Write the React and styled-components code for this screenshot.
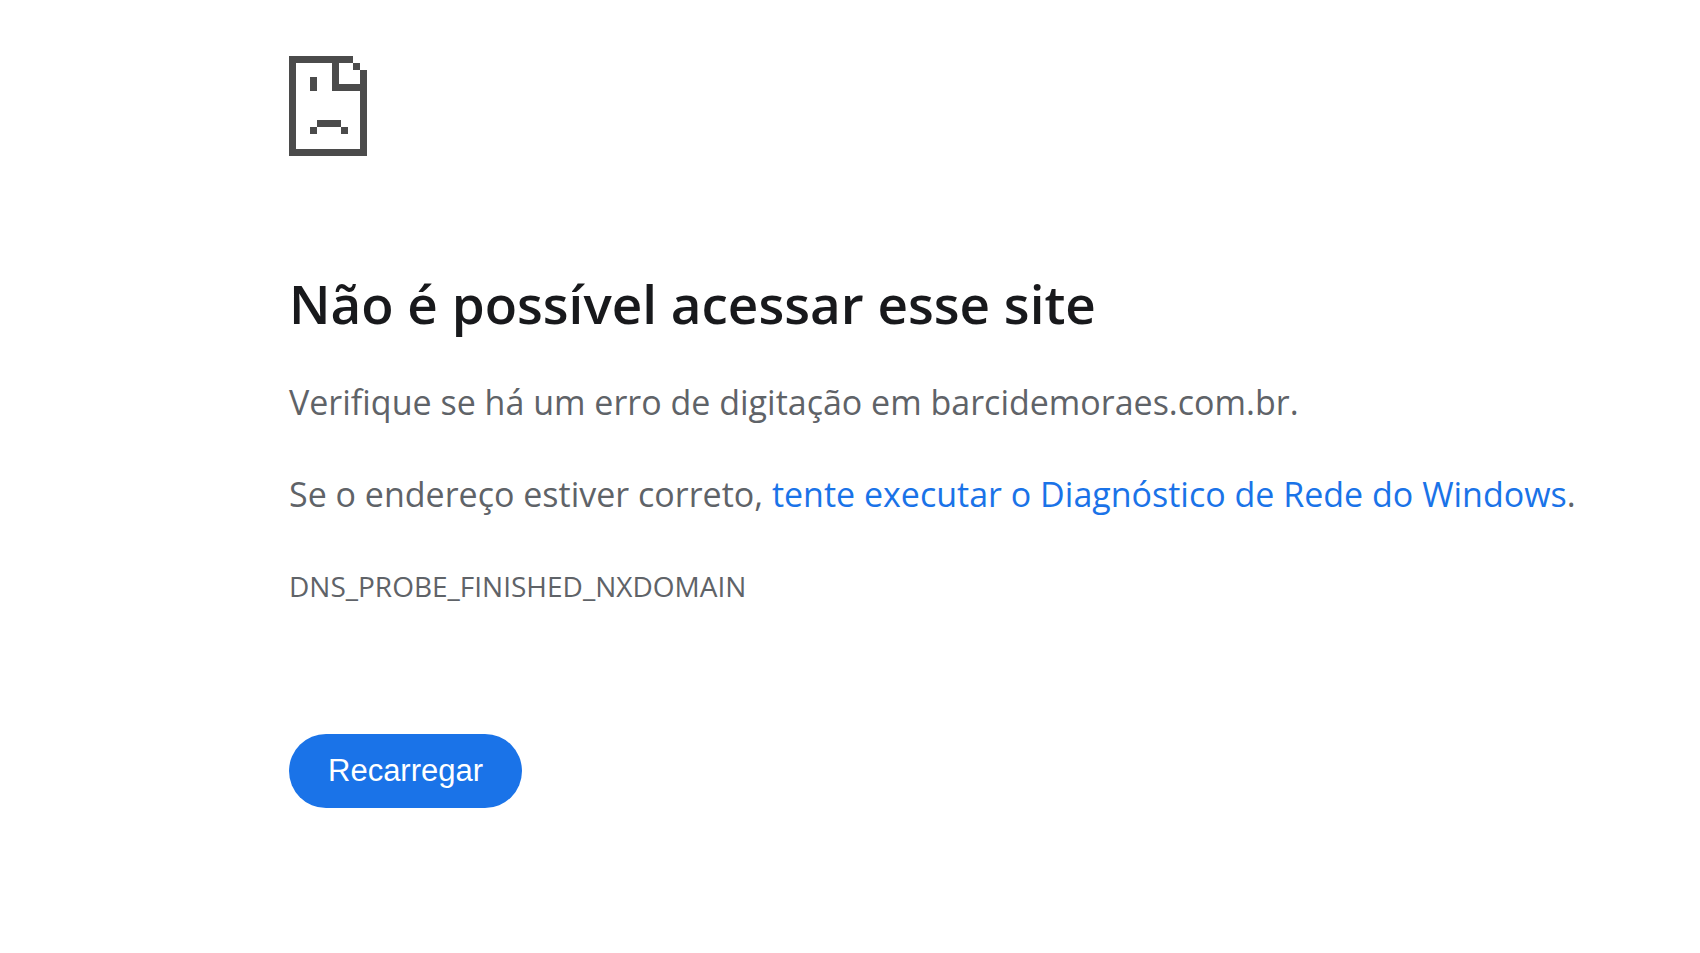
import styled, { createGlobalStyle } from 'styled-components';

const GlobalStyle = createGlobalStyle`
  body {
    margin: 0;
    background-color: #fff;
    color: #5f6368;
    font-family: "Segoe UI", "Open Sans", "Noto Sans", sans-serif;
  }
`

const Layout = styled.main`
  box-sizing: border-box;
  padding: 56px 32px 64px 17%;
`

const PageIcon = styled.svg`
  display: block;
  width: 78px;
  height: 100px;
  fill: #4b4b4b;
`

const Title = styled.h1`
  margin: 112px 0 0;
  color: #18191c;
  font-size: 53px;
  font-weight: 600;
  line-height: 72px;
`

const Message = styled.p`
  margin: 32px 0 0;
  font-size: 34px;
  line-height: 60px;
`

const ErrorCode = styled.div`
  margin-top: 32px;
  font-size: 28px;
  line-height: 60px;
`

const DiagnoseLink = styled.a`
  color: #1a73e8;
  text-decoration: none;
`

const ReloadButton = styled.button`
  margin-top: 118px;
  padding: 0 39px;
  border: 0;
  border-radius: 37px;
  background-color: #1a73e8;
  color: #fff;
  font-family: Arial, "Liberation Sans", sans-serif;
  font-size: 31px;
  line-height: 74px;
  cursor: pointer;
`

function SadPage() {
  return (
    <PageIcon viewBox="0 0 78 100" aria-hidden="true">
      <path d="M0 0H64V7H50V28H71V14H78V100H0ZM7 7V93H71V35H43V7Z" fillRule="evenodd" />
      <path d="M64 7h7v7h-7z" />
      <path d="M21 21h7v14h-7z" />
      <path d="M28 64h24v7h-24zM21 71h7v7h-7zM52 71h7v7h-7z" />
    </PageIcon>
  )
}

function App() {
  return (
    <>
      <GlobalStyle />
      <Layout>
        <SadPage />
        <Title>Não é possível acessar esse site</Title>
        <Message>Verifique se há um erro de digitação em barcidemoraes.com.br.</Message>
        <Message>
          Se o endereço estiver correto, <DiagnoseLink href="#diagnostico">tente executar o Diagnóstico de Rede do Windows</DiagnoseLink>.
        </Message>
        <ErrorCode>DNS_PROBE_FINISHED_NXDOMAIN</ErrorCode>
        <ReloadButton type="button" onClick={() => window.location.reload()}>Recarregar</ReloadButton>
      </Layout>
    </>
  );
}

export default App;
